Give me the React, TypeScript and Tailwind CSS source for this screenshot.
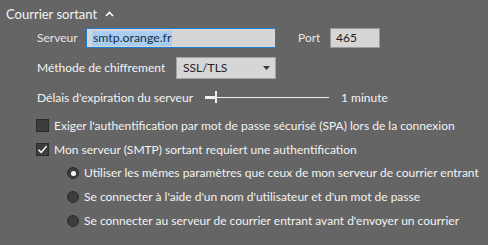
import React from "react";

const font = { fontFamily: '"Lato", "Liberation Sans", sans-serif' };

function Checkbox({ checked }: { checked?: boolean }) {
  return (
    <div className="w-[13px] h-[13px] bg-[#3d3d3d] border border-[#2a2a2a] flex items-center justify-center shrink-0">
      {checked && (
        <svg width="11" height="11" viewBox="0 0 11 11">
          <path d="M1.5 5.8 L4.2 8.4 L9.5 2.2" stroke="#ffffff" strokeWidth="1.5" fill="none" />
        </svg>
      )}
    </div>
  );
}

function Radio({ checked }: { checked?: boolean }) {
  return (
    <div className="w-[12px] h-[12px] rounded-full bg-[#3d3d3d] border border-[#2a2a2a] flex items-center justify-center shrink-0">
      {checked && <div className="w-[5px] h-[5px] rounded-full bg-white" />}
    </div>
  );
}

export default function App() {
  return (
    <div
      className="w-[488px] h-[245px] bg-[#656565] text-[#f3f3f3] text-[12px] leading-none overflow-hidden whitespace-nowrap"
      style={font}
    >
      <div className="h-[28px] pl-[6px] flex items-center gap-[8px] text-[13px]">
        <span>Courrier sortant</span>
        <svg width="9" height="6" viewBox="0 0 9 6">
          <path d="M1 5 L4.5 1.5 L8 5" stroke="#ffffff" strokeWidth="1.6" fill="none" />
        </svg>
      </div>
      <div className="h-[20px] pl-[37px] flex items-center">
        <span className="w-[49px] text-[#e6e6e6]">Serveur</span>
        <div className="w-[190px] h-[20px] bg-[#d6d6d6] border border-[#1e7fd6] flex items-center pl-[5px]">
          <span className="bg-[#a8cdf0] text-[#1b2f48] h-[15px] flex items-center px-[1px] text-[12.3px]">smtp.orange.fr</span>
        </div>
        <span className="ml-[22px] w-[32px] text-[#e6e6e6]">Port</span>
        <div className="w-[50px] h-[20px] bg-[#d6d6d6] border border-[#9a9a9a] flex items-center pl-[5px] text-[#222]">
          465
        </div>
      </div>
      <div className="mt-[9px] h-[22px] pl-[37px] flex items-center">
        <span className="w-[139px]">Méthode de chiffrement</span>
        <div className="w-[100px] h-[22px] bg-[#d6d6d6] border border-[#a3a3a3] flex items-center justify-between pl-[6px] pr-[5px] text-[#222]">
          <span>SSL/TLS</span>
          <svg width="7" height="4" viewBox="0 0 7 4">
            <path d="M0 0 L7 0 L3.5 4 Z" fill="#3a3a3a" />
          </svg>
        </div>
      </div>
      <div className="mt-[8px] h-[21px] pl-[37px] flex items-center">
        <span className="w-[168px]">Délais d'expiration du serveur</span>
        <div className="relative w-[124px] h-[21px] flex items-center">
          <div className="w-full h-[1px] bg-[#f0f0f0]" />
          <div className="absolute left-0 top-[9px] w-[11px] h-[3px] bg-[#f0f0f0]" />
          <div className="absolute left-[10px] top-[4px] w-[2px] h-[12px] bg-[#f0f0f0]" />
        </div>
        <span className="ml-[12px]">1 minute</span>
      </div>
      <div className="mt-[6px] flex flex-col">
        <div className="h-[23.75px] pl-[36px] flex items-center gap-[5px]">
          <Checkbox />
          <span>Exiger l'authentification par mot de passe sécurisé (SPA) lors de la connexion</span>
        </div>
        <div className="h-[23.75px] pl-[36px] flex items-center gap-[5px]">
          <Checkbox checked />
          <span>Mon serveur (SMTP) sortant requiert une authentification</span>
        </div>
        <div className="h-[23.75px] pl-[67px] flex items-center gap-[5px]">
          <Radio checked />
          <span>Utiliser les mêmes paramètres que ceux de mon serveur de courrier entrant</span>
        </div>
        <div className="h-[23.75px] pl-[67px] flex items-center gap-[5px]">
          <Radio />
          <span>Se connecter à l'aide d'un nom d'utilisateur et d'un mot de passe</span>
        </div>
        <div className="h-[23.75px] pl-[67px] flex items-center gap-[5px]">
          <Radio />
          <span>Se connecter au serveur de courrier entrant avant d'envoyer un courrier</span>
        </div>
      </div>
    </div>
  );
}
